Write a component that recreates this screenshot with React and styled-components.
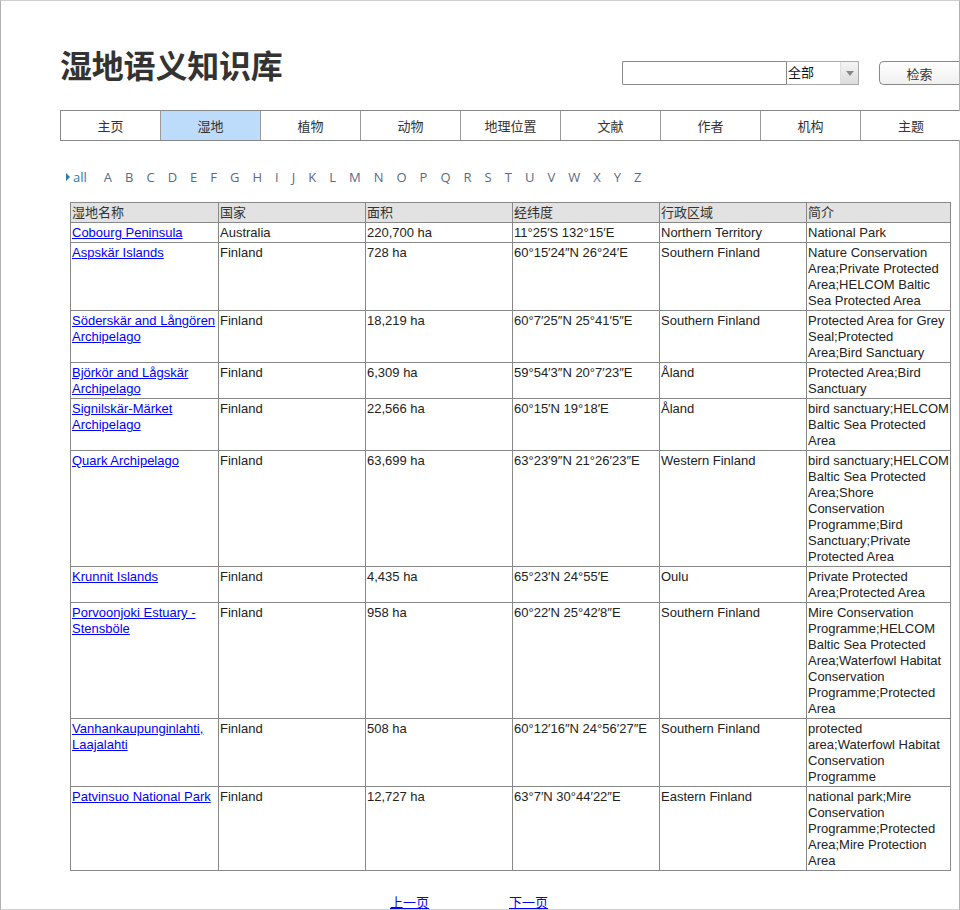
import React from "react";
import styled, { createGlobalStyle } from "styled-components";

const title = "湿地语义知识库";

const navItems = ["主页", "湿地", "植物", "动物", "地理位置", "文献", "作者", "机构", "主题"];

const letters = "ABCDEFGHIJKLMNOPQRSTUVWXYZ".split("");

const columns = [
  { title: "湿地名称", width: 148 },
  { title: "国家", width: 147 },
  { title: "面积", width: 147 },
  { title: "经纬度", width: 147 },
  { title: "行政区域", width: 147 },
  { title: "简介", width: 144 },
];

// line breaks follow the reference table
const rows = [
  ["Cobourg Peninsula", "Australia", "220,700 ha", "11°25′S 132°15′E", "Northern Territory", "National Park"],
  ["Aspskär Islands", "Finland", "728 ha", "60°15′24″N 26°24′E", "Southern Finland", "Nature Conservation\nArea;Private Protected\nArea;HELCOM Baltic\nSea Protected Area"],
  ["Söderskär and Långören\nArchipelago", "Finland", "18,219 ha", "60°7′25″N 25°41′5″E", "Southern Finland", "Protected Area for Grey\nSeal;Protected\nArea;Bird Sanctuary"],
  ["Björkör and Lågskär\nArchipelago", "Finland", "6,309 ha", "59°54′3″N 20°7′23″E", "Åland", "Protected Area;Bird\nSanctuary"],
  ["Signilskär-Märket\nArchipelago", "Finland", "22,566 ha", "60°15′N 19°18′E", "Åland", "bird sanctuary;HELCOM\nBaltic Sea Protected\nArea"],
  ["Quark Archipelago", "Finland", "63,699 ha", "63°23′9″N 21°26′23″E", "Western Finland", "bird sanctuary;HELCOM\nBaltic Sea Protected\nArea;Shore\nConservation\nProgramme;Bird\nSanctuary;Private\nProtected Area"],
  ["Krunnit Islands", "Finland", "4,435 ha", "65°23′N 24°55′E", "Oulu", "Private Protected\nArea;Protected Area"],
  ["Porvoonjoki Estuary -\nStensböle", "Finland", "958 ha", "60°22′N 25°42′8″E", "Southern Finland", "Mire Conservation\nProgramme;HELCOM\nBaltic Sea Protected\nArea;Waterfowl Habitat\nConservation\nProgramme;Protected\nArea"],
  ["Vanhankaupunginlahti,\nLaajalahti", "Finland", "508 ha", "60°12′16″N 24°56′27″E", "Southern Finland", "protected\narea;Waterfowl Habitat\nConservation\nProgramme"],
  ["Patvinsuo National Park", "Finland", "12,727 ha", "63°7′N 30°44′22″E", "Eastern Finland", "national park;Mire\nConservation\nProgramme;Protected\nArea;Mire Protection\nArea"],
];

const GlobalStyle = createGlobalStyle`
  html, body {
    margin: 0;
    padding: 0;
    background: #fff;
  }
  body {
    font-family: "Liberation Sans", "Noto Sans CJK SC", sans-serif;
    color: #333;
  }
`;

const App = () => {
  return (
    <>
      <GlobalStyle />
      <Frame>
        <Header>
          <Title>{title}</Title>
          <SearchBox>
            <SearchInput type="text" />
            <Select>
              <SelectValue>全部</SelectValue>
              <SelectArrow>
                <svg width="8" height="5" viewBox="0 0 8 5">
                  <path d="M0 0 L8 0 L4 5 Z" fill="#888" />
                </svg>
              </SelectArrow>
            </Select>
            <SearchButton>检索</SearchButton>
          </SearchBox>
        </Header>

        <Nav>
          {navItems.map((item) => (
            <NavItem key={item} $active={item === "湿地"}>
              {item}
            </NavItem>
          ))}
        </Nav>

        <Alphabet>
          <AllLink>
            <svg width="4" height="8" viewBox="0 0 4 8">
              <path d="M0 0 L4 4 L0 8 Z" fill="#2a7ab0" />
            </svg>
            all
          </AllLink>
          {letters.map((l) => (
            <Letter key={l}>{l}</Letter>
          ))}
        </Alphabet>

        <Table>
          <colgroup>
            {columns.map((c) => (
              <col key={c.title} style={{ width: c.width }} />
            ))}
          </colgroup>
          <thead>
            <tr>
              {columns.map((c) => (
                <Th key={c.title}>{c.title}</Th>
              ))}
            </tr>
          </thead>
          <tbody>
            {rows.map((r) => (
              <tr key={r[0]}>
                <Td>
                  <NameLink href="#">{r[0]}</NameLink>
                </Td>
                {r.slice(1).map((v, i) => (
                  <Td key={i}>{v}</Td>
                ))}
              </tr>
            ))}
          </tbody>
        </Table>

        <Pager>
          <PageLink href="#">上一页</PageLink>
          <PageLink href="#">下一页</PageLink>
        </Pager>
      </Frame>
    </>
  );
};

export default App;

const Frame = styled.div`
  box-sizing: border-box;
  width: 960px;
  height: 910px;
  border-top: 1px solid #d0d0d0;
  border-left: 1px solid #b0b0b0;
  border-right: 1px solid #b0b0b0;
  border-bottom: 1px solid #d0d0d0;
`;

const Header = styled.div`
  display: flex;
  justify-content: space-between;
  align-items: flex-start;
  height: 109px;
  box-sizing: border-box;
  padding: 45px 0 0 59px;
`;

const Title = styled.h1`
  margin: 0;
  font-family: "Noto Sans CJK SC", sans-serif;
  font-size: 32px;
  line-height: 36px;
  font-weight: 700;
  color: #333;
  letter-spacing: -0.2px;
`;

const SearchBox = styled.div`
  display: flex;
  align-items: center;
  margin-top: 15px;
`;

const SearchInput = styled.input`
  box-sizing: border-box;
  width: 164px;
  height: 24px;
  border: 1px solid #888;
  border-right: none;
  border-radius: 2px 0 0 2px;
  padding: 0 4px;
  outline: none;
`;

const Select = styled.div`
  box-sizing: border-box;
  display: flex;
  width: 73px;
  height: 24px;
  border: 1px solid #aaa;
  border-left: 1px solid #888;
  background: #fff;
`;

const SelectValue = styled.span`
  flex: 1;
  font-family: "Noto Sans CJK SC", sans-serif;
  font-size: 13px;
  line-height: 20px;
  color: #111;
  padding-left: 1px;
`;

const SelectArrow = styled.span`
  width: 17px;
  display: flex;
  align-items: center;
  justify-content: center;
  background: linear-gradient(#f4f4f4, #dcdcdc);
  border-left: 1px solid #ddd;
`;

const SearchButton = styled.button`
  box-sizing: border-box;
  margin-left: 20px;
  width: 80px;
  height: 24px;
  border: 1px solid #888;
  border-right: none;
  border-radius: 5px 0 0 5px;
  background: linear-gradient(#ffffff, #f0f0f0);
  font-family: "Noto Sans CJK SC", sans-serif;
  font-size: 13px;
  color: #333;
  padding: 0;
`;

const Nav = styled.div`
  display: flex;
  margin-left: 59px;
  height: 31px;
  box-sizing: border-box;
  border-top: 1px solid #888;
  border-bottom: 1px solid #888;
  border-left: 1px solid #888;
`;

const NavItem = styled.div`
  box-sizing: border-box;
  width: 100px;
  flex: none;
  display: flex;
  align-items: center;
  justify-content: center;
  border-right: 1px solid #999;
  background: ${({ $active }) => ($active ? "#bddcfc" : "#fff")};
  font-family: "Noto Sans CJK SC", sans-serif;
  font-size: 13px;
  color: #333;

  &:last-child {
    border-right: none;
  }
`;

const Alphabet = styled.div`
  display: flex;
  align-items: center;
  gap: 13px;
  margin: 26px 0 0 65px;
  height: 20px;
  font-family: "Open Sans", sans-serif;
  font-size: 13px;
`;

const AllLink = styled.span`
  display: flex;
  align-items: center;
  gap: 3px;
  color: #2a7ab0;
  margin-right: 4px;
`;

const Letter = styled.span`
  color: #5a6a80;
`;

const Table = styled.table`
  margin: 15px 0 0 69px;
  width: 880px;
  border-collapse: collapse;
  table-layout: fixed;
  font-family: "Liberation Sans", "Noto Sans CJK SC", sans-serif;
  font-size: 13px;
  line-height: 16px;
  color: #222;
`;

const Th = styled.th`
  text-align: left;
  font-weight: normal;
  font-family: "Noto Sans CJK SC", sans-serif;
  background: #e2e2e2;
  border: 1px solid #888;
  padding: 1px 1px 2px;
  vertical-align: top;
  color: #333;
  white-space: nowrap;
`;

const Td = styled.td`
  border: 1px solid #888;
  padding: 2px 1px 1px;
  vertical-align: top;
  white-space: pre;
  overflow: visible;
`;

const NameLink = styled.a`
  color: #00f;
  text-decoration: underline;
`;

const Pager = styled.div`
  display: flex;
  gap: 80px;
  margin: 24px 0 0 389px;
`;

const PageLink = styled.a`
  font-family: "Noto Sans CJK SC", sans-serif;
  font-size: 13px;
  line-height: 14px;
  color: #00f;
  text-decoration: underline;
`;
